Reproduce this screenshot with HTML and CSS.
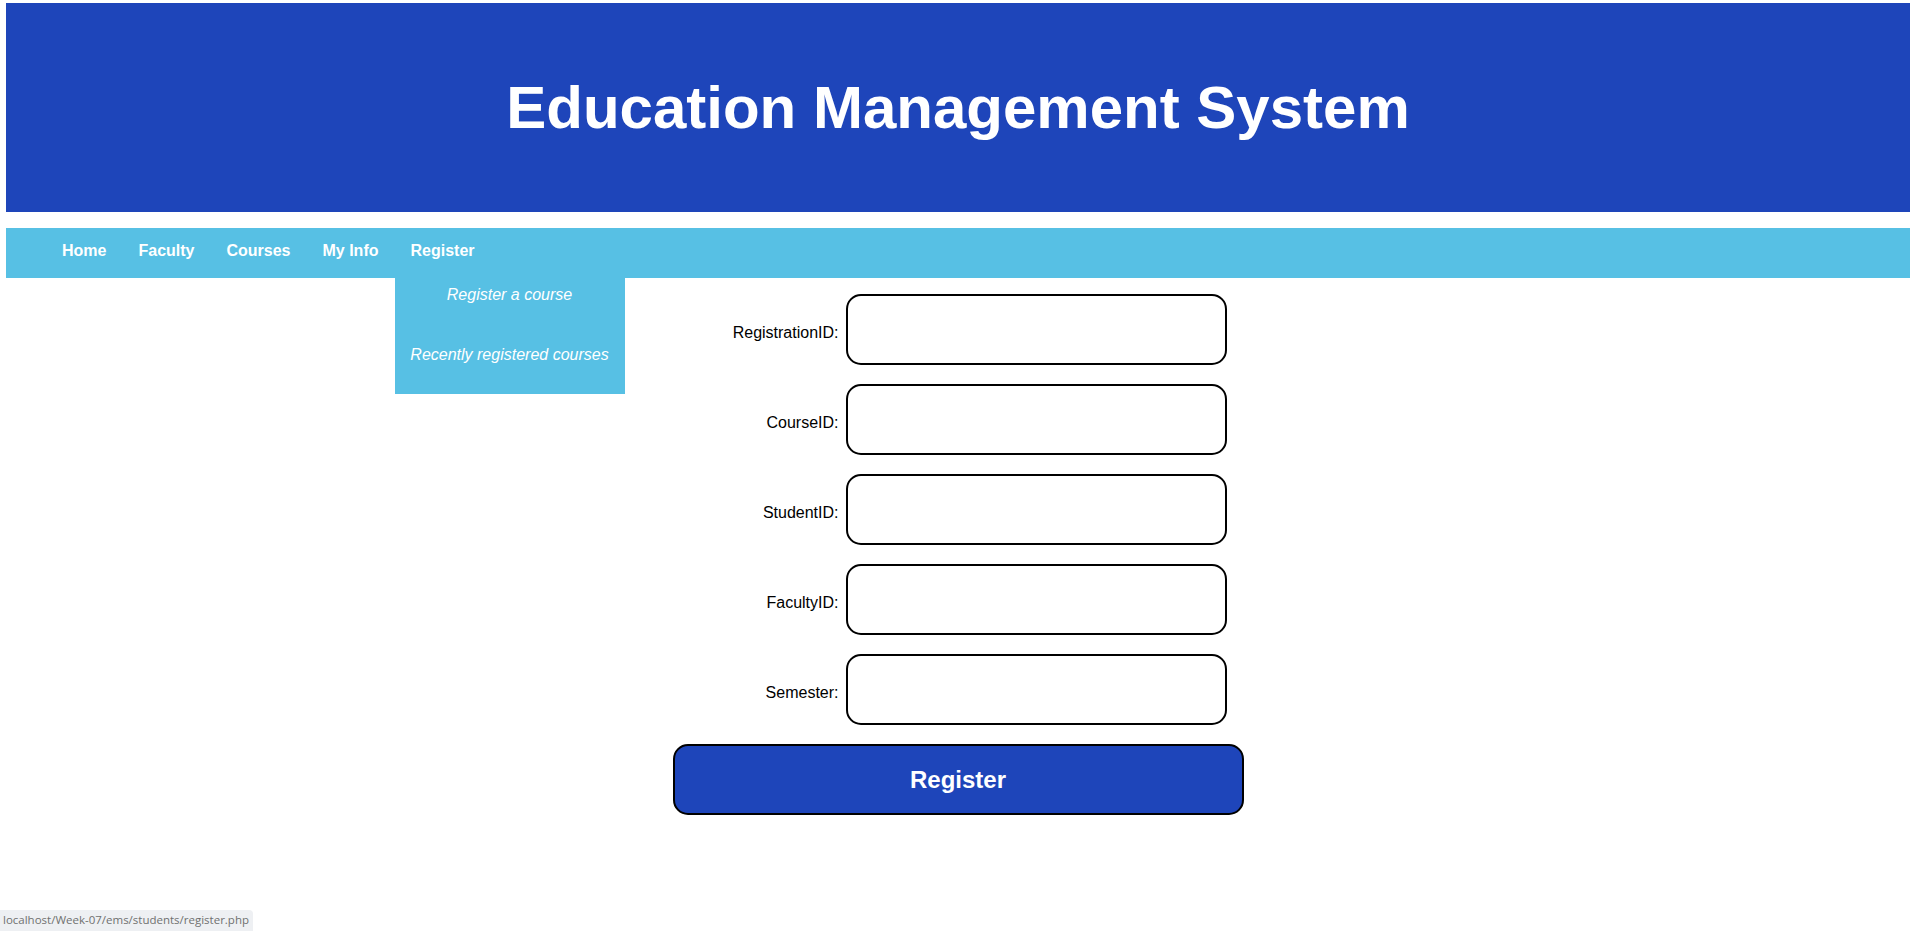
FILE: index.html
```html
<!DOCTYPE html>
<html lang="en">
<head>
<meta charset="utf-8">
<title>Register</title>
<link rel="stylesheet" href="styles.css">
</head>
<body>
<div class="page">
  <header class="banner">
    <h1 class="title">Education Management System</h1>
  </header>
  <nav class="nav">
    <ul class="menu">
      <li class="item"><a class="link" href="#">Home</a></li>
      <li class="item"><a class="link" href="#">Faculty</a></li>
      <li class="item"><a class="link" href="#">Courses</a></li>
      <li class="item"><a class="link" href="#">My Info</a></li>
      <li class="item has-drop"><a class="link" href="#">Register</a>
        <div class="dropdown">
          <a class="drop-link" href="#">Register a course</a>
          <a class="drop-link" href="#">Recently registered courses</a>
        </div>
      </li>
    </ul>
  </nav>
  <form class="form">
    <div class="row"><label class="label">RegistrationID:</label><input class="field" type="text"></div>
    <div class="row"><label class="label">CourseID:</label><input class="field" type="text"></div>
    <div class="row"><label class="label">StudentID:</label><input class="field" type="text"></div>
    <div class="row"><label class="label">FacultyID:</label><input class="field" type="text"></div>
    <div class="row"><label class="label">Semester:</label><input class="field" type="text"></div>
    <button class="submit" type="button">Register</button>
  </form>
</div>
<div class="status">localhost/Week-07/ems/students/register.php</div>
</body>
</html>
```
FILE: styles.css
```css
html, body {
  margin: 0;
  padding: 0;
  background: #ffffff;
}
body {
  font-family: "Liberation Sans", Arial, sans-serif;
  font-size: 16px;
  color: #000;
}
.page {
  padding: 3px 8px 0 6px;
}
.banner {
  background: #1e45ba;
  height: 209px;
  display: flex;
  align-items: center;
  justify-content: center;
}
.title {
  margin: 0;
  color: #ffffff;
  font-size: 60px;
  font-weight: bold;
  line-height: normal;
}
.nav {
  margin-top: 16px;
  background: #57c0e4;
  height: 50px;
}
.menu {
  list-style: none;
  margin: 0;
  padding: 0 0 0 40px;
  display: flex;
}
.item {
  position: relative;
}
.link {
  display: block;
  padding: 14px 16px 18px;
  line-height: 18px;
  color: #ffffff;
  font-weight: bold;
  text-decoration: none;
}
.dropdown {
  position: absolute;
  top: 100%;
  left: 0;
  width: 230px;
  height: 116px;
  overflow: hidden;
  background: #57c0e4;
  z-index: 5;
}
.drop-link {
  display: block;
  box-sizing: border-box;
  height: 60px;
  padding-top: 8px;
  line-height: 18px;
  text-align: center;
  color: #ffffff;
  font-style: italic;
  text-decoration: none;
}
.form {
  width: 571px;
  margin: 16px auto 0;
  display: flex;
  flex-direction: column;
  gap: 19px;
}
.row {
  display: grid;
  grid-template-columns: 166px 381px;
  column-gap: 7px;
  align-items: center;
}
.label {
  text-align: right;
  margin-top: 6px;
  line-height: normal;
}
.field {
  box-sizing: border-box;
  width: 381px;
  height: 71px;
  margin: 0;
  border: 2px solid #000;
  border-radius: 15px;
  background: #fff;
  font-size: 16px;
  padding: 0 12px;
}
.submit {
  box-sizing: border-box;
  width: 571px;
  height: 71px;
  margin: 0;
  border: 2px solid #000;
  border-radius: 15px;
  background: #1e45ba;
  color: #ffffff;
  font-family: "Liberation Sans", Arial, sans-serif;
  font-size: 24px;
  font-weight: bold;
  padding: 0;
}
.status {
  position: fixed;
  left: 0;
  bottom: 0;
  box-sizing: border-box;
  width: 253px;
  height: 21px;
  padding: 2px 0 0 3px;
  background: #eef0f3;
  border-top-right-radius: 4px;
  color: #707070;
  font-family: "Open Sans", "Noto Sans", sans-serif;
  font-size: 11.5px;
  line-height: 16px;
  white-space: nowrap;
  overflow: hidden;
}
```
